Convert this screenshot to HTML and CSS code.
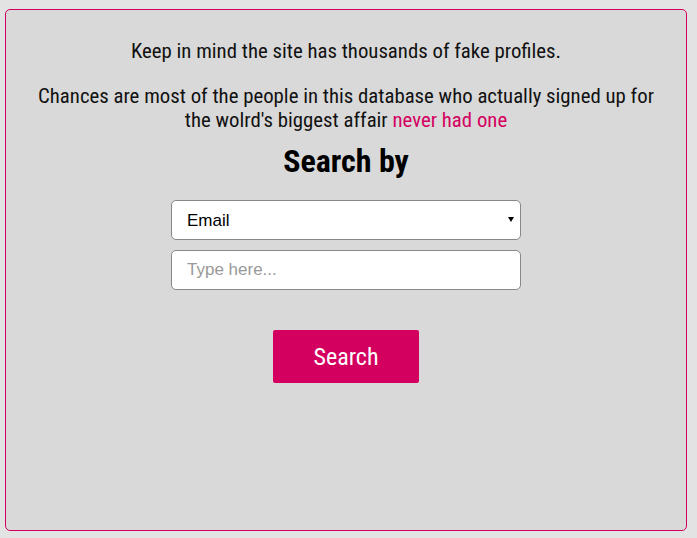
FILE: index.html
```html
<!DOCTYPE html>
<html lang="en">
<head>
  <meta charset="UTF-8" />
  <meta name="viewport" content="width=device-width, initial-scale=1.0"/>
  <title>Search</title>
  <link rel="stylesheet" href="styles.css">
</head>
<body>

<div class="card">
  <p class="note">Keep in mind the site has thousands of fake profiles.</p>
  <p class="note">Chances are most of the people in this database who actually signed up for<br>the wolrd's biggest affair <span class="pink">never had one</span></p>
  <h2>Search by</h2>
  <form class="search" onsubmit="return false">
    <div class="select-wrap">
      <select class="field">
        <option>Email</option>
        <option>Name</option>
        <option>Username</option>
      </select>
    </div>
    <input class="field" type="text" placeholder="Type here..." />
    <button class="btn">Search</button>
  </form>
</div>

</body>
</html>
```

FILE: styles.css
```css
body { margin: 0; padding: 9px 10px 7px 5px; background: #e3e3e3; font-family: "Roboto Condensed", "Liberation Sans Narrow", Roboto, sans-serif; }
.card {
  background: #d9d9d9; border: 1px solid #d4005f; border-radius: 5px;
  height: 522px; box-sizing: border-box; padding: 29px 16px; text-align: center; color: #111;
}
.note { margin: 0 0 21px; font-size: 20.8px; line-height: 24px; }
.note + .note { margin-bottom: 11px; }
.pink { color: #d4005f; }
h2 { margin: 0 0 21px; font-size: 32px; line-height: 36px; font-weight: bold; color: #000; }
.search { display: flex; flex-direction: column; align-items: center; gap: 10px; }
.select-wrap { position: relative; width: 350px; }
.select-wrap::after {
  content: ""; position: absolute; right: 7px; top: 17px;
  border-left: 3px solid transparent; border-right: 3px solid transparent; border-top: 5px solid #000;
}
.field {
  display: block; width: 350px; height: 40px; box-sizing: border-box; border: 1px solid #888; border-radius: 5px;
  background: #fff; font-family: "Liberation Sans", Arial, sans-serif; font-size: 17px; padding: 0 15px; color: #000;
}
select.field { appearance: none; -webkit-appearance: none; outline: none; }
.field::placeholder { color: #999; }
.btn {
  margin-top: 30px; width: 146px; height: 53px; border: none; border-radius: 2px;
  background: #d4005f; color: #fff; font-family: inherit; font-size: 24px; cursor: pointer;
}
```
